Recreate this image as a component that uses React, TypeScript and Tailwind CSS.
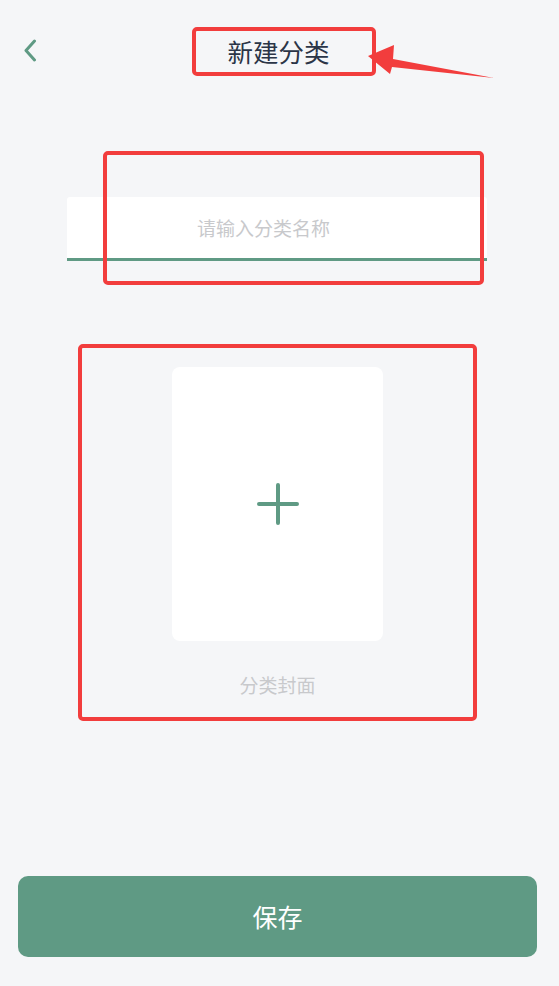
const cjk = { fontFamily: '"Noto Sans CJK SC", "Noto Sans", sans-serif' };

export default function App() {
  return (
    <div className="relative w-[559px] h-[986px] bg-[#f5f6f8] flex flex-col overflow-hidden" style={cjk}>
      {/* Header */}
      <header className="h-[104px] grid grid-cols-[1fr_auto_1fr] items-center">
        <button className="justify-self-start ml-[24px] mb-[3px]">
          <svg width="13" height="23" viewBox="0 0 13 23" fill="none" stroke="#5f9a84" strokeWidth="3" strokeLinecap="round" strokeLinejoin="round">
            <path d="M10.5 2 2 11.5l8.5 9.5" />
          </svg>
        </button>
        <h1 className="text-[25.5px] leading-none font-normal text-[#2b3547] pb-[2px] pr-[2px]">新建分类</h1>
        <div />
      </header>

      {/* Name input */}
      <div className="mt-[93px] ml-[67px] w-[420px] h-[64px] bg-white rounded-t-[3px] border-b-[3px] border-[#5f9a84] flex items-center">
        <input
          placeholder="请输入分类名称"
          className="w-full pl-[130px] text-left text-[19px] bg-transparent outline-none placeholder:text-[#c8c9cc] pt-[2px]"
        />
      </div>

      {/* Cover */}
      <div className="mt-[106px] flex flex-col items-center pr-[4px]">
        <button className="w-[211px] h-[274px] bg-white rounded-[8px] flex items-center justify-center">
          <svg width="42" height="42" viewBox="0 0 42 42" fill="none" stroke="#5f9a84" strokeWidth="4" strokeLinecap="round">
            <path d="M21 2v38M2 21h38" />
          </svg>
        </button>
        <span className="mt-[34px] text-[19px] leading-none text-[#c8c9cc]">分类封面</span>
      </div>

      {/* Save */}
      <div className="mt-auto mb-[29px] px-[18px] pr-[22px]">
        <button className="w-full h-[81px] rounded-[10px] bg-[#5f9a84] text-white text-[25px]">保存</button>
      </div>

      {/* annotation marks */}
      <div className="absolute left-[192px] top-[27px] w-[184px] h-[49px] border-4 border-[#f23d3d] rounded-[5px]" />
      <div className="absolute left-[103px] top-[151px] w-[381px] h-[134px] border-4 border-[#f23d3d] rounded-[5px]" />
      <div className="absolute left-[78px] top-[344px] w-[399px] h-[377px] border-4 border-[#f23d3d] rounded-[5px]" />
      <svg className="absolute left-0 top-0 pointer-events-none" width="559" height="120">
        <polygon points="368,56 394,45 393,59 494,78 392,67 390,74" fill="#f23d3d" />
      </svg>
    </div>
  );
}
